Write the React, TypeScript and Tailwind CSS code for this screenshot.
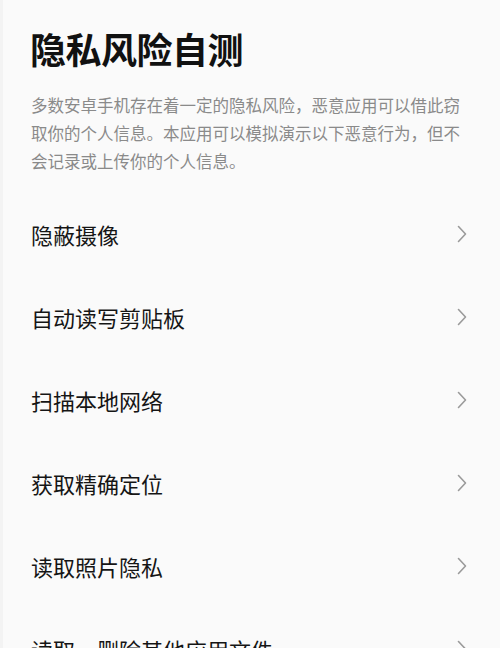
import React from "react";

const items = [
  "隐蔽摄像",
  "自动读写剪贴板",
  "扫描本地网络",
  "获取精确定位",
  "读取照片隐私",
  "读取、删除其他应用文件",
];

function Chevron() {
  return (
    <svg width="12" height="20" viewBox="0 0 12 20" fill="none" className="shrink-0">
      <path d="M2.5 2.5 L9.5 10 L2.5 17.5" stroke="#9a9a9a" strokeWidth="1.6" strokeLinecap="round" strokeLinejoin="round" />
    </svg>
  );
}

export default function App() {
  return (
    <div
      className="w-[500px] h-[648px] overflow-hidden bg-[#fafafa] border-l-[3px] border-[#f3f3f3]"
      style={{ fontFamily: '"Noto Sans CJK SC", "Noto Sans", sans-serif' }}
    >
      <div className="pl-[28px] pr-[32px] pt-[26px]">
        <h1 className="text-[36px] leading-[44px] font-bold text-[#111111] tracking-[-0.5px] -ml-[1px]">隐私风险自测</h1>
        <p className="mt-[21px] w-[438px] text-[16.5px] leading-[28px] text-[#8a8a8a]">
          多数安卓手机存在着一定的隐私风险，恶意应用可以借此窃取你的个人信息。本应用可以模拟演示以下恶意行为，但不会记录或上传你的个人信息。
        </p>
        <ul className="mt-[17px] flex flex-col">
          {items.map((t) => (
            <li key={t} className="h-[83px] flex items-center justify-between">
              <span className="text-[22px] leading-[30px] text-[#151515]">{t}</span>
              <Chevron />
            </li>
          ))}
        </ul>
      </div>
    </div>
  );
}
